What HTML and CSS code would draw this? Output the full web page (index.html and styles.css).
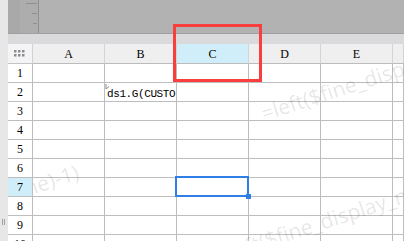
FILE: index.html
```html
<!DOCTYPE html>
<html lang="en">
  <head>
    <meta charset="UTF-8" />
    <title>Sheet</title>
    <link rel="stylesheet" href="styles.css">
  </head>
  <body>
    <div class="app">
      <div class="side"><span class="grip"></span></div>
      <div class="main">
        <div class="toolbar">
          <div class="ruler">
            <span class="tick long"></span>
            <span class="tick"></span>
            <span class="tick"></span>
          </div>
          <div class="canvas"></div>
        </div>
        <div class="band"></div>
        <div class="sheet">
          <div class="corner">
            <svg width="11" height="7" viewBox="0 0 11 7">
              <g fill="#8c8c8c">
                <rect x="0" y="0" width="2.5" height="2.5"/><rect x="4" y="0" width="2.5" height="2.5"/><rect x="8" y="0" width="2.5" height="2.5"/>
                <rect x="0" y="4" width="2.5" height="2.5"/><rect x="4" y="4" width="2.5" height="2.5"/><rect x="8" y="4" width="2.5" height="2.5"/>
              </g>
            </svg>
          </div>
          <div class="colhead">A</div>
          <div class="colhead">B</div>
          <div class="colhead active">C</div>
          <div class="colhead">D</div>
          <div class="colhead">E</div>
          <div class="colhead"></div>

          <div class="rowhead">1</div><div class="cell"></div><div class="cell"></div><div class="cell"></div><div class="cell"></div><div class="cell"></div><div class="cell"></div>
          <div class="rowhead">2</div><div class="cell"></div>
          <div class="cell formula">
            <svg class="marker" width="5" height="6" viewBox="0 0 5 6"><path d="M1 0V5M1 5L4 2.5" stroke="#8a8a8a" stroke-width="1" fill="none"/></svg>
            <span>ds1.G(CUSTO</span>
          </div>
          <div class="cell"></div><div class="cell"></div><div class="cell"></div><div class="cell"></div>
          <div class="rowhead">3</div><div class="cell"></div><div class="cell"></div><div class="cell"></div><div class="cell"></div><div class="cell"></div><div class="cell"></div>
          <div class="rowhead">4</div><div class="cell"></div><div class="cell"></div><div class="cell"></div><div class="cell"></div><div class="cell"></div><div class="cell"></div>
          <div class="rowhead">5</div><div class="cell"></div><div class="cell"></div><div class="cell"></div><div class="cell"></div><div class="cell"></div><div class="cell"></div>
          <div class="rowhead">6</div><div class="cell"></div><div class="cell"></div><div class="cell"></div><div class="cell"></div><div class="cell"></div><div class="cell"></div>
          <div class="rowhead active">7</div><div class="cell"></div><div class="cell"></div><div class="cell"></div><div class="cell"></div><div class="cell"></div><div class="cell"></div>
          <div class="rowhead">8</div><div class="cell"></div><div class="cell"></div><div class="cell"></div><div class="cell"></div><div class="cell"></div><div class="cell"></div>
          <div class="rowhead">9</div><div class="cell"></div><div class="cell"></div><div class="cell"></div><div class="cell"></div><div class="cell"></div><div class="cell"></div>
          <div class="rowhead">10</div><div class="cell"></div><div class="cell"></div><div class="cell"></div><div class="cell"></div><div class="cell"></div><div class="cell"></div>
        </div>
      </div>

      <!-- overlays: watermark sits on the cell area only -->
      <div class="watermarks">
        <span class="wm wm-1">=left($fine_display_name)-1)</span>
        <span class="wm wm-2">=left($fine_display_name)-1)</span>
        <span class="wm wm-3">=left($fine_display_name)-1)</span>
      </div>
      <div class="selection"><span class="handle"></span></div>
      <div class="highlight"></div>
    </div>
  </body>
</html>
```

FILE: styles.css
```css
body {
  margin: 0;
  padding: 0;
  background-color: #ffffff;
  font-family: "Liberation Serif", serif;
  overflow: hidden;
}

.app {
  position: relative;
  display: flex;
  width: 404px;
  height: 241px;
  overflow: hidden;
}

.side {
  width: 8px;
  flex: none;
  background-color: #e7e7e7;
  display: flex;
  flex-direction: column;
  padding-top: 219px;
  box-sizing: border-box;
}

.grip {
  width: 3px;
  height: 6px;
  margin-left: 2px;
  border-left: 1px solid #a0a0a0;
  border-right: 1px solid #a0a0a0;
  box-sizing: border-box;
}

.main {
  flex: 1;
  display: flex;
  flex-direction: column;
  min-width: 0;
}

.toolbar {
  flex: none;
  height: 34px;
  display: flex;
  background-color: #b2b2b2;
  border-bottom: 1px solid #9f9f9f;
  box-sizing: border-box;
}

.ruler {
  width: 31px;
  background: linear-gradient(to right, #a9a9a9 12px, #adadad 12px);
  border-right: 1px solid #8e8e8e;
  box-sizing: border-box;
  display: flex;
  flex-direction: column;
  align-items: flex-end;
  padding: 3px 1px 0 0;
  gap: 9px;
}

.tick {
  width: 5px;
  height: 1px;
  background-color: #8e8e8e;
}

.tick.long {
  width: 11px;
}

.tick:last-child {
  width: 4px;
}

.canvas {
  flex: 1;
}

.band {
  flex: none;
  height: 10px;
  background-color: #dadadc;
}

.sheet {
  flex: none;
  display: grid;
  grid-template-columns: 25px repeat(5, 72px) 1fr;
  grid-template-rows: 20px;
  grid-auto-rows: 19px;
  font-size: 12px;
  color: #000;
}

.corner,
.colhead,
.rowhead,
.cell {
  box-sizing: border-box;
  border-right: 1px solid #bdbdbd;
  border-bottom: 1px solid #bdbdbd;
}

.corner {
  background-color: #f4f4f6;
  display: flex;
  align-items: center;
  justify-content: center;
  padding-right: 2px;
  border-right-color: #d2d2d2;
  border-bottom-color: #c4c4c4;
}

.colhead {
  background-color: #efefef;
  display: flex;
  align-items: center;
  justify-content: center;
  border-right-color: #d4d4d4;
  border-bottom-color: #bcbcbc;
  padding-top: 1px;
}

.colhead.active,
.rowhead.active {
  background-color: #cfeefa;
}

.rowhead {
  display: flex;
  align-items: center;
  justify-content: center;
  background-color: #ffffff;
  padding-top: 1px;
}

.formula {
  position: relative;
  overflow: hidden;
  white-space: nowrap;
  font-family: "Liberation Mono", monospace;
  font-size: 11px;
  letter-spacing: -0.4px;
  padding: 5px 0 0 2px;
  line-height: 12px;
}

.marker {
  position: absolute;
  left: 0;
  top: 1px;
}

.watermarks {
  position: absolute;
  left: 33px;
  top: 64px;
  right: 0;
  bottom: 0;
  overflow: hidden;
  pointer-events: none;
}

.wm {
  position: absolute;
  font-family: "Open Sans", sans-serif;
  font-size: 21px;
  line-height: 21px;
  color: rgba(0, 0, 0, 0.11);
  white-space: nowrap;
  transform-origin: 0 100%;
  transform: rotate(-18deg);
}

.wm-1 {
  left: 232px;
  top: 39px;
}

.wm-2 {
  left: -211px;
  top: 181px;
}

.wm-3 {
  left: 188px;
  top: 181px;
}

.selection {
  position: absolute;
  left: 175px;
  top: 176px;
  width: 74px;
  height: 21px;
  border: 2px solid #2f7fe6;
  box-sizing: border-box;
}

.handle {
  position: absolute;
  right: -4px;
  bottom: -4px;
  width: 5px;
  height: 5px;
  background-color: #2f7fe6;
}

.highlight {
  position: absolute;
  left: 173px;
  top: 24px;
  width: 89px;
  height: 58px;
  border: 3px solid #fa3d3d;
  box-sizing: border-box;
}
```
